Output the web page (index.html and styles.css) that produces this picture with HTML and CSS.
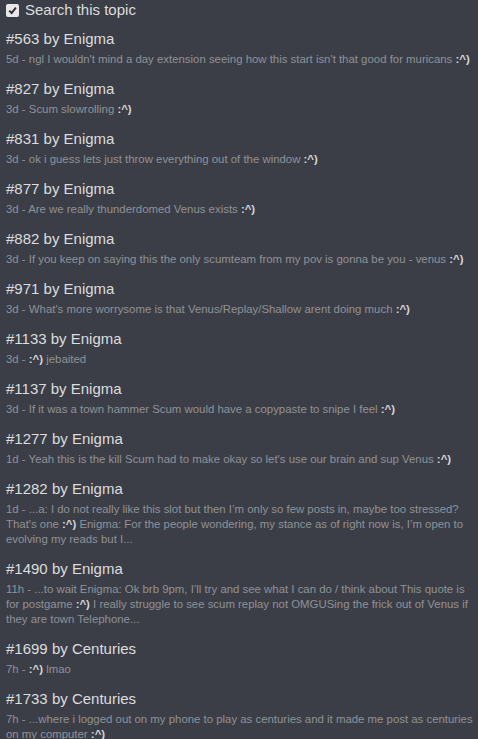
FILE: index.html
```html
<!DOCTYPE html>
<html>
<head>
<meta charset="utf-8">
<link rel="stylesheet" href="styles.css">
</head>
<body>
<div class="panel">
  <label class="search-toggle">
    <span class="checkbox"><svg width="9" height="9" viewBox="0 0 9 9"><path d="M1.2 4.6 L3.6 7 L7.9 1.6" fill="none" stroke="#2e3036" stroke-width="2"/></svg></span>
    <span>Search this topic</span>
  </label>
  <ul class="results">
    <li class="result"><div class="title">#563 by Enigma</div><div class="snippet">5d - ngl I wouldn't mind a day extension seeing how this start isn't that good for muricans <b>:^)</b></div></li>
    <li class="result"><div class="title">#827 by Enigma</div><div class="snippet">3d - Scum slowrolling <b>:^)</b></div></li>
    <li class="result"><div class="title">#831 by Enigma</div><div class="snippet">3d - ok i guess lets just throw everything out of the window <b>:^)</b></div></li>
    <li class="result"><div class="title">#877 by Enigma</div><div class="snippet">3d - Are we really thunderdomed Venus exists <b>:^)</b></div></li>
    <li class="result"><div class="title">#882 by Enigma</div><div class="snippet">3d - If you keep on saying this the only scumteam from my pov is gonna be you - venus <b>:^)</b></div></li>
    <li class="result"><div class="title">#971 by Enigma</div><div class="snippet">3d - What's more worrysome is that Venus/Replay/Shallow arent doing much <b>:^)</b></div></li>
    <li class="result"><div class="title">#1133 by Enigma</div><div class="snippet">3d - <b>:^)</b> jebaited</div></li>
    <li class="result"><div class="title">#1137 by Enigma</div><div class="snippet">3d - If it was a town hammer Scum would have a copypaste to snipe I feel <b>:^)</b></div></li>
    <li class="result"><div class="title">#1277 by Enigma</div><div class="snippet">1d - Yeah this is the kill Scum had to make okay so let's use our brain and sup Venus <b>:^)</b></div></li>
    <li class="result"><div class="title">#1282 by Enigma</div><div class="snippet">1d - ...a: I do not really like this slot but then I’m only so few posts in, maybe too stressed? That's one <b>:^)</b> Enigma: For the people wondering, my stance as of right now is, I’m open to evolving my reads but I...</div></li>
    <li class="result"><div class="title">#1490 by Enigma</div><div class="snippet">11h - ...to wait Enigma: Ok brb 9pm, I’ll try and see what I can do / think about This quote is for postgame <b>:^)</b> I really struggle to see scum replay not OMGUSing the frick out of Venus if they are town Telephone...</div></li>
    <li class="result"><div class="title">#1699 by Centuries</div><div class="snippet">7h - <b>:^)</b> lmao</div></li>
    <li class="result"><div class="title">#1733 by Centuries</div><div class="snippet">7h - ...where i logged out on my phone to play as centuries and it made me post as centuries on my computer <b>:^)</b></div></li>
  </ul>
</div>
</body>
</html>
```
FILE: styles.css
```css
html, body {
  margin: 0;
  padding: 0;
  background: #3b3e46;
}
body {
  font-family: "Liberation Sans", Arial, sans-serif;
  color: #dcdddf;
  overflow: hidden;
}
.panel {
  padding: 0 4px 0 6px;
}
.search-toggle {
  display: flex;
  align-items: center;
  gap: 6px;
  height: 20px;
  font-size: 15px;
  line-height: 20px;
  margin-bottom: 10px;
}
.checkbox {
  width: 13px;
  height: 13px;
  box-sizing: border-box;
  background: #e8e8e8;
  border-radius: 2px;
  display: flex;
  align-items: center;
  justify-content: center;
}
.checkbox svg {
  display: block;
}
.results {
  list-style: none;
  margin: 0;
  padding: 0;
}
.result {
  margin-bottom: 13px;
}
.title {
  font-size: 15px;
  line-height: 18px;
  color: #dcdddf;
}
.snippet {
  margin-top: 4px;
  font-size: 11.4px;
  line-height: 15px;
  color: #909298;
}
.snippet b {
  color: #d6d7d9;
  font-weight: bold;
}
```
